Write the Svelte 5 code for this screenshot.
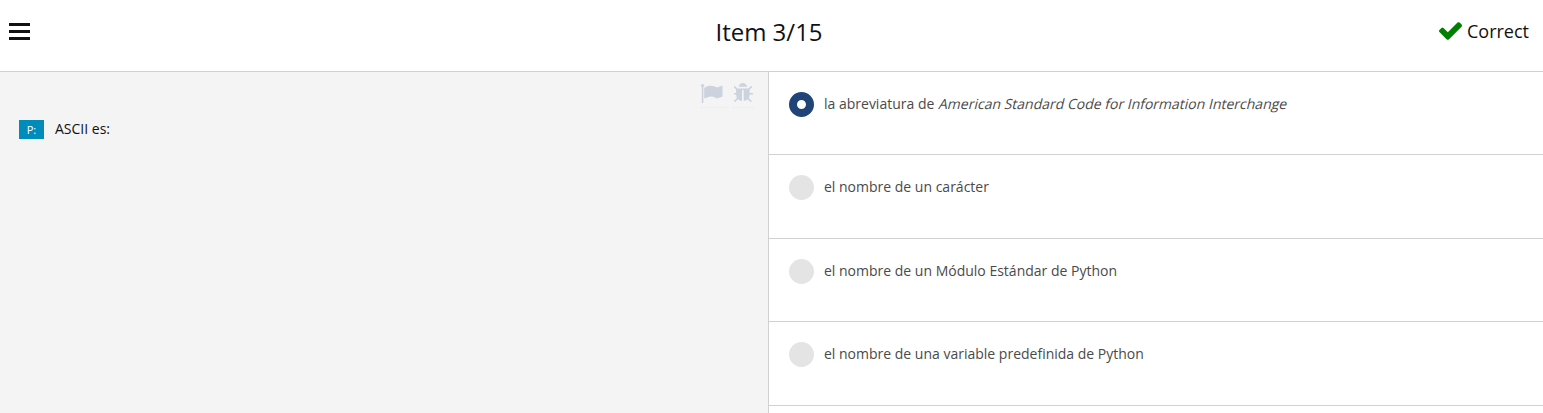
<script>
  let selected = $state(0);
  const options = [
    { text: 'la abreviatura de ', term: 'American Standard Code for Information Interchange' },
    { text: 'el nombre de un carácter' },
    { text: 'el nombre de un Módulo Estándar de Python' },
    { text: 'el nombre de una variable predefinida de Python' }
  ];
</script>

<div class="quiz">
  <header>
    <button class="menu" aria-label="Menu">
      <svg viewBox="0 0 21 18" width="21" height="18" shape-rendering="crispEdges">
        <path d="M0 1h21v3H0zM0 8h21v3H0zM0 15h21v3H0z" />
      </svg>
    </button>
    <h1>Item 3/15</h1>
    <div class="status">
      <svg viewBox="121 334 1550 1188" width="23" height="18">
        <path d="M1671 566q0 40-28 68l-724 724-136 136q-28 28-68 28t-68-28l-136-136-362-362q-28-28-28-68t28-68l136-136q28-28 68-28t68 28l294 295 656-657q28-28 68-28t68 28l136 136q28 28 28 68z" />
      </svg>
      <span>Correct</span>
    </div>
  </header>

  <main>
    <section class="question">
      <div class="tools">
        <span class="tool flag">
          <svg viewBox="64 128 1728 1536" width="21.5" height="19.2">
            <path d="M320 256q0 72-64 110v1266q0 13-9.5 22.5t-22.5 9.5h-64q-13 0-22.5-9.5t-9.5-22.5v-1266q-64-38-64-110 0-53 37.5-90.5t90.5-37.5 90.5 37.5 37.5 90.5zm1472 64v763q0 25-12.5 38.5t-39.5 27.5q-215 116-369 116-61 0-123.5-22t-108.5-48-115.5-48-142.5-22q-192 0-464 146-17 9-33 9-26 0-45-19t-19-45v-742q0-32 31-55 21-14 79-43 236-120 421-120 107 0 200 29t219 88q38 19 88 19 54 0 117.5-21t110-47 88-47 54.5-21q26 0 45 19t19 45z" />
          </svg>
        </span>
        <span class="tool bug">
          <svg viewBox="160 64 1472 1572" width="19.4" height="19" preserveAspectRatio="none">
            <path d="M1632 960q0 26-19 45t-45 19h-224q0 171-67 290l208 209q19 19 19 45t-19 45q-18 19-45 19t-45-19l-198-197q-5 5-15 13t-42 28.5-65 36.5-82 29-97 13v-896h-128v896q-51 0-101.5-13.5t-87-33-66-39-43.5-32.5l-15-14-183 207q-20 21-48 21-24 0-43-16-19-18-20.5-44.5t15.5-46.5l202-227q-58-114-58-274h-224q-26 0-45-19t-19-45 19-45 45-19h224v-294l-173-173q-19-19-19-45t19-45 45-19 45 19l173 173h844l173-173q19-19 45-19t45 19 19 45-19 45l-173 173v294h224q26 0 45 19t19 45zm-480-576h-640q0-133 93.5-226.5t226.5-93.5 226.5 93.5 93.5 226.5z" />
          </svg>
        </span>
      </div>
      <div class="prompt">
        <span class="tag">P:</span>
        <span>ASCII es:</span>
      </div>
    </section>

    <section class="answers">
      {#each options as option, i}
        <button class="option" onclick={() => (selected = i)}>
          <span class="radio" class:on={selected === i}></span>
          <span class="label">{option.text}{#if option.term}<em>{option.term}</em>{/if}</span>
        </button>
      {/each}
    </section>
  </main>
</div>

<style>
  .quiz {
    height: 413px;
    display: flex;
    flex-direction: column;
    overflow: hidden;
    background: #fff;
    color: #111;
    font: 14px/20px "Open Sans", sans-serif;
  }
  button {
    margin: 0;
    padding: 0;
    border: 0;
    background: none;
    font: inherit;
    color: inherit;
    text-align: left;
  }
  svg {
    display: block;
    fill: currentColor;
  }
  header {
    box-sizing: border-box;
    height: 72px;
    flex: none;
    display: grid;
    grid-template-columns: 1fr auto 1fr;
    padding: 0 14px 0 9px;
    border-bottom: 1px solid #d1d1d1;
  }
  .menu {
    justify-self: start;
    align-self: start;
    margin-top: 22px;
  }
  h1 {
    margin: 16px 0 0;
    font-size: 24px;
    line-height: 32px;
    font-weight: 400;
  }
  .status {
    justify-self: end;
    display: flex;
    gap: 5px;
    margin-top: 19px;
    font-size: 18px;
    line-height: 24px;
  }
  .status svg {
    margin-top: 3px;
    fill: #008000;
  }
  main {
    flex: 1;
    display: flex;
    min-height: 0;
  }
  .question {
    box-sizing: border-box;
    width: 769px;
    flex: none;
    background: #f4f4f4;
    border-right: 1px solid #d1d1d1;
  }
  .tools {
    display: flex;
    justify-content: flex-end;
    gap: 6px;
    padding: 11px 15.5px 0 0;
    color: #ccd3de;
  }
  .tool {
    height: 24px;
    border-bottom: 1px dotted #e6e9ed;
  }
  .flag {
    width: 26px;
  }
  .flag svg {
    margin-top: 0.6px;
  }
  .bug {
    width: 19.5px;
  }
  .bug svg {
    margin-left: 0.5px;
  }
  .prompt {
    display: flex;
    gap: 11px;
    padding: 11px 0 0 19px;
  }
  .tag {
    width: 25px;
    height: 19px;
    margin-top: 1px;
    background: #008cba;
    color: #fff;
    font-size: 11px;
    line-height: 20px;
    text-align: center;
  }
  .answers {
    flex: 1;
  }
  .option {
    box-sizing: border-box;
    width: 100%;
    height: 83.45px;
    display: flex;
    align-items: flex-start;
    gap: 10px;
    padding: 20px 20px 0;
    border-bottom: 1px solid #d1d1d1;
    color: #4a4a4a;
  }
  .radio {
    box-sizing: border-box;
    width: 25px;
    height: 25px;
    flex: none;
    border-radius: 50%;
    background: #e4e4e4;
  }
  .radio.on {
    border: 8.5px solid #204477;
    background: #fff;
  }
  .label {
    margin-top: 2px;
  }
  em {
    display: inline-block;
    font-style: normal;
    transform: skewX(-14deg);
    transform-origin: 0 15px;
  }
</style>
